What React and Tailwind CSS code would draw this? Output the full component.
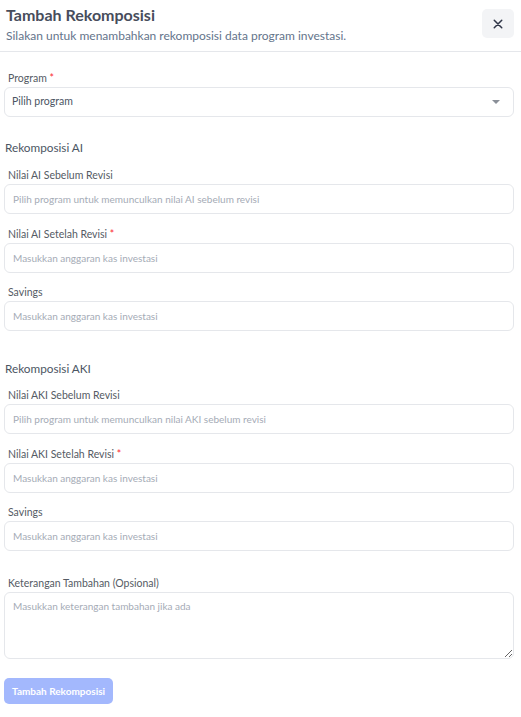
import React from "react";

const Label = ({ children, required }) => (
  <div className="pl-1 mb-[2px] text-[10.5px] leading-[14px] text-[#555b64]">
    {children}
    {required && <span className="text-red-500"> *</span>}
  </div>
);

const Field = ({ label, required, placeholder, className = "" }) => (
  <div className={className}>
    <Label required={required}>{label}</Label>
    <div className="h-[30px] rounded-md border border-gray-200 bg-white flex items-center pl-2 text-[10px] text-[#a5abb6]">
      {placeholder}
    </div>
  </div>
);

const SectionTitle = ({ children, className = "" }) => (
  <div className={`pl-[1px] text-[11.75px] leading-4 text-[#4b5563] ${className}`}>{children}</div>
);

const App = () => {
  return (
    <div
      className="w-[521px] h-[717px] bg-white overflow-hidden"
      style={{ fontFamily: 'Lato, "Noto Sans", sans-serif' }}
    >
      {/* Header */}
      <div className="flex items-start justify-between border-b border-gray-200 h-[52px] pl-[6px] pr-[7px]">
        <div className="pt-[4px]">
          <div className="text-[16px] leading-[22px] font-bold text-[#474d5c]">Tambah Rekomposisi</div>
          <div className="text-[12px] leading-4 mt-[2px] text-[#64748b]">
            Silakan untuk menambahkan rekomposisi data program investasi.
          </div>
        </div>
        <button className="mt-[9px] w-[32px] h-[29px] rounded-[5px] bg-gray-100 flex items-center justify-center text-[#2f3547]">
          <svg width="10" height="10" viewBox="0 0 12 12" fill="none" stroke="currentColor" strokeWidth="1.8" strokeLinecap="round">
            <path d="M1.5 1.5l9 9M10.5 1.5l-9 9" />
          </svg>
        </button>
      </div>

      {/* Body */}
      <div className="pl-[4px] pr-[7px] pt-[19px]">
        <Label required>Program</Label>
        <div className="h-[30px] rounded-md border border-gray-200 flex items-center justify-between pl-[7px] pr-[13px] text-[10.5px] text-[#4b5563]">
          <span>Pilih program</span>
          <svg width="8" height="4" viewBox="0 0 8 4">
            <path d="M0 0h8L4 4z" fill="#8a8f98" />
          </svg>
        </div>

        <SectionTitle className="mt-[23px] mb-[12px]">Rekomposisi AI</SectionTitle>
        <Field label="Nilai AI Sebelum Revisi" placeholder="Pilih program untuk memunculkan nilai AI sebelum revisi" />
        <Field className="mt-[13px]" label="Nilai AI Setelah Revisi" required placeholder="Masukkan anggaran kas investasi" />
        <Field className="mt-[12px]" label="Savings" placeholder="Masukkan anggaran kas investasi" />

        <SectionTitle className="mt-[30px] mb-[11px]">Rekomposisi AKI</SectionTitle>
        <Field label="Nilai AKI Sebelum Revisi" placeholder="Pilih program untuk memunculkan nilai AKI sebelum revisi" />
        <Field className="mt-[13px]" label="Nilai AKI Setelah Revisi" required placeholder="Masukkan anggaran kas investasi" />
        <Field className="mt-[12px]" label="Savings" placeholder="Masukkan anggaran kas investasi" />

        <div className="mt-[25px]">
          <Label>Keterangan Tambahan (Opsional)</Label>
          <textarea
            className="block w-full h-[67px] rounded-md border border-gray-200 px-2 py-[6px] text-[10px] outline-none placeholder:text-[#a5abb6]"
            placeholder="Masukkan keterangan tambahan jika ada"
          />
        </div>

        <button className="mt-[19px] h-[26px] px-[8px] rounded-[5px] bg-[#a3b8fd] text-white text-[10px] font-bold">
          Tambah Rekomposisi
        </button>
      </div>
    </div>
  );
};

export default App;
